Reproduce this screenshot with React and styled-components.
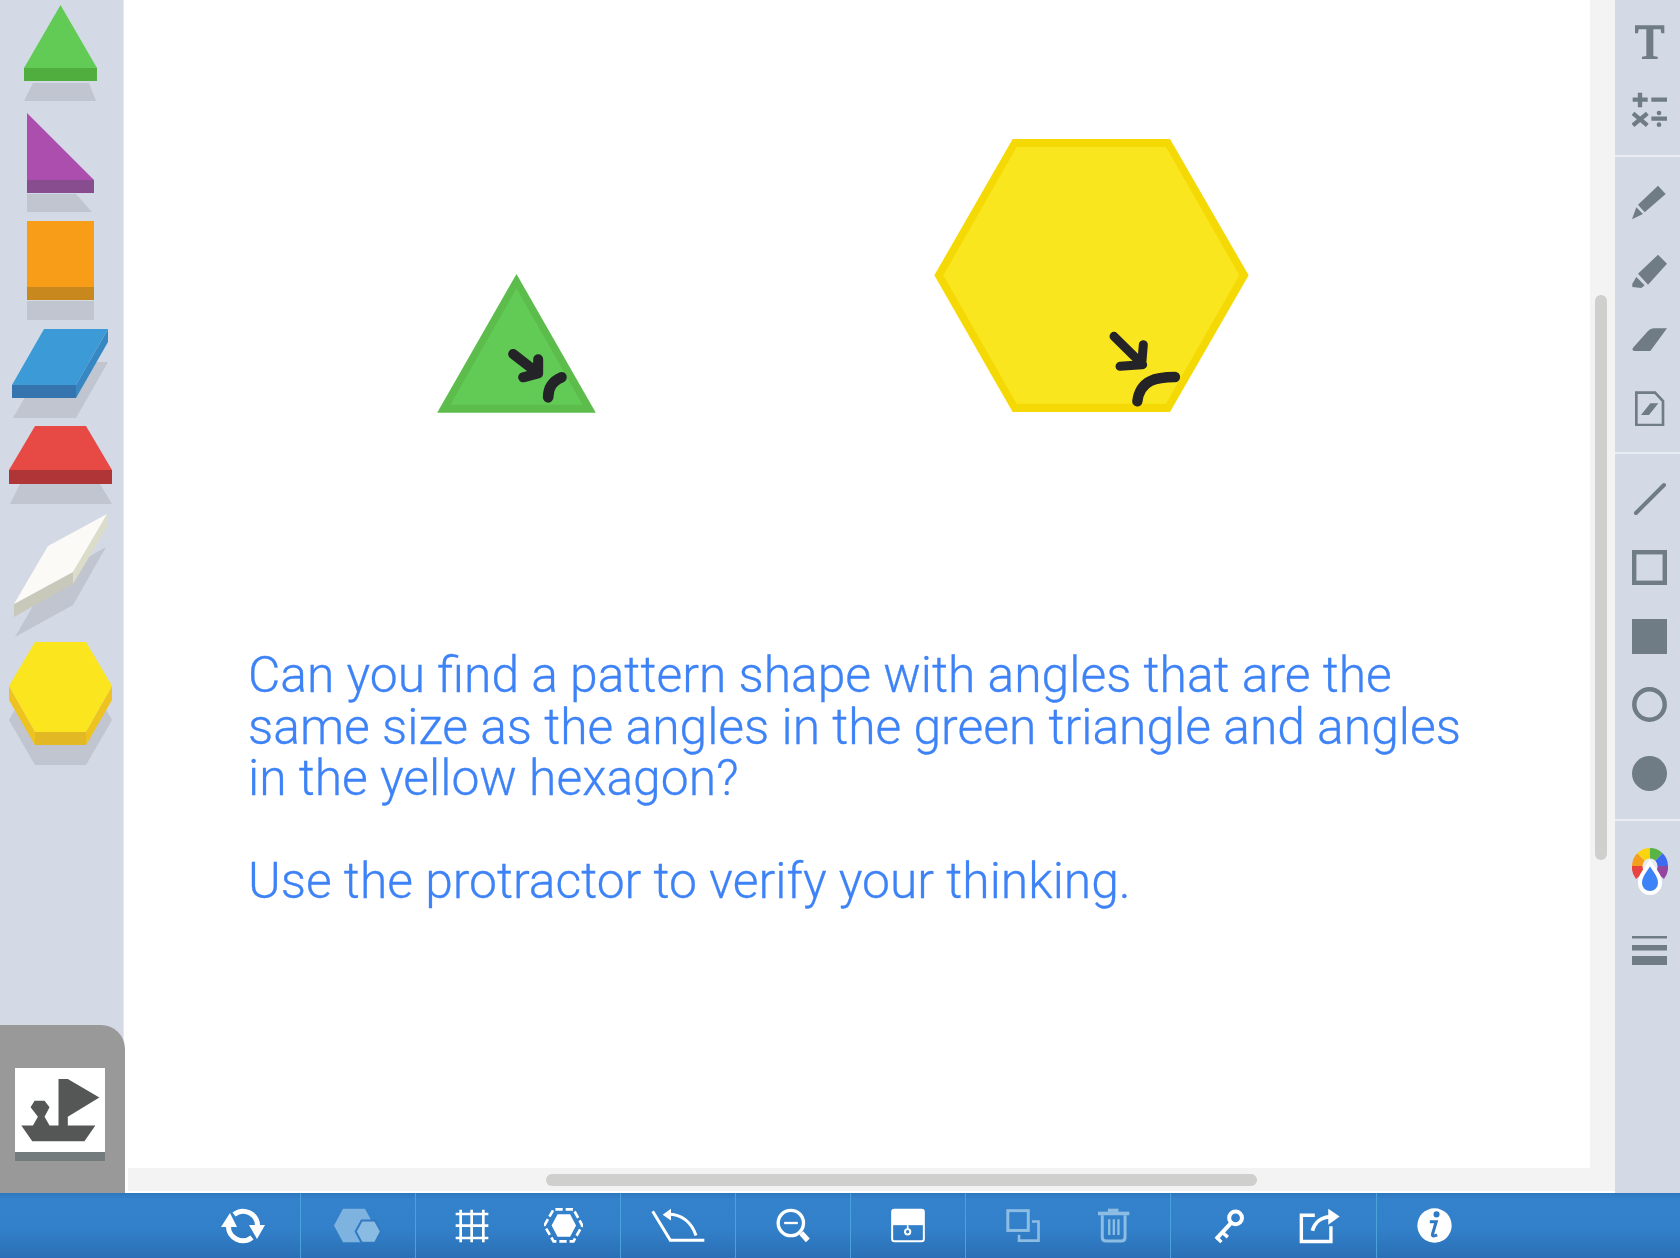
import React from 'react';
import styled, { createGlobalStyle } from 'styled-components';

const GlobalStyle = createGlobalStyle`
    html, body {
        margin: 0;
        padding: 0;
        height: 100%;
        overflow: hidden;
    }
    #root {
        height: 100%;
    }
`;

const Page = styled.div`
    width: 1680px;
    height: 1258px;
    display: flex;
    flex-direction: column;
    background-color: #ffffff;
    font-family: Roboto, 'Liberation Sans', sans-serif;
`;

const Main = styled.div`
    flex: 1;
    display: flex;
    min-height: 0;
`;

/* left tray with pattern blocks */
const ShapeTray = styled.aside`
    width: 124px;
    flex-shrink: 0;
    display: flex;
    flex-direction: column;
    justify-content: space-between;
    background-color: #d3dae6;
    box-shadow: inset -1px 0 0 #e4e8ef;
`;

const Blocks = styled.div`
    display: flex;
    flex-direction: column;
`;

const BlockSvg = styled.svg`
    display: block;
    width: 123px;
    flex-shrink: 0;
`;

const BoatPanel = styled.div`
    position: relative;
    z-index: 1;
    width: 125px;
    height: 168px;
    flex-shrink: 0;
    box-sizing: border-box;
    padding: 43px 0 0 15px;
    background-color: #999999;
    border-top-right-radius: 24px;
`;

const BoatTile = styled.div`
    width: 90px;
    height: 93px;
    box-sizing: border-box;
    background-color: #ffffff;
    border-bottom: 9px solid #737b7d;
`;

const BoatSvg = styled.svg`
    display: block;
    width: 90px;
    height: 84px;
`;

/* middle: canvas and its scrollbars */
const WorkArea = styled.div`
    flex: 1;
    min-width: 0;
    display: flex;
    flex-direction: column;
`;

const CanvasRow = styled.div`
    flex: 1;
    min-height: 0;
    display: flex;
`;

const Canvas = styled.div`
    flex: 1;
    position: relative;
    background-color: #ffffff;
`;

const Piece = styled.svg`
    position: absolute;
    left: ${(p) => p.$left}px;
    top: ${(p) => p.$top}px;
`;

const Note = styled.div`
    position: absolute;
    left: 124px;
    top: 650px;
    width: 1300px;
    font-size: 49.8px;
    font-weight: 300;
    line-height: 51.5px;
    color: #3d82f6;
    -webkit-text-stroke: 0.3px #3d82f6;
`;

const NoteBlock = styled.p`
    margin: 0 0 51.5px;
`;

const VerticalTrack = styled.div`
    width: 25px;
    flex-shrink: 0;
    box-sizing: border-box;
    padding: 295px 0 0 5px;
    background-color: #f3f3f3;
`;

const VerticalThumb = styled.div`
    width: 12px;
    height: 565px;
    border-radius: 6px;
    background-color: #cfcfcd;
`;

const HorizontalTrack = styled.div`
    height: 23px;
    flex-shrink: 0;
    box-sizing: border-box;
    margin: 0 0 2px 4px;
    padding: 6px 0 0 418px;
    background-color: #f3f3f3;
`;

const HorizontalThumb = styled.div`
    width: 711px;
    height: 12px;
    border-radius: 6px;
    background-color: #cfcfcd;
`;

/* right tools */
const ToolBar = styled.aside`
    width: 65px;
    flex-shrink: 0;
    display: flex;
    flex-direction: column;
    background-color: #d3dae6;
`;

const ToolGroup = styled.div`
    display: flex;
    flex-direction: column;
    padding: ${(p) => p.$top}px 0 ${(p) => p.$bottom}px 4px;
    border-bottom: ${(p) => (p.$last ? 'none' : '2px solid #e9ecf2')};
    gap: ${(p) => p.$gap || 0}px;
`;

const Tool = styled.div`
    height: 68.6px;
    display: flex;
    align-items: center;
    justify-content: center;
    color: #6f7c85;
`;

const ToolSvg = styled.svg`
    display: block;
    width: 35px;
    height: 35px;
`;

/* bottom bar */
const BottomBar = styled.footer`
    height: 65px;
    flex-shrink: 0;
    box-sizing: border-box;
    display: flex;
    padding-left: 186px;
    background: linear-gradient(#2c76c1 0, #3482cb 6px, #3280c9 55%, #2a6fb6 100%);
`;

const BarGroup = styled.div`
    display: flex;
    box-sizing: border-box;
    padding: 0 11.4px;
    border-right: ${(p) => (p.$last ? 'none' : '1px solid #4aa2d8')};
`;

const BarButton = styled.div`
    width: 91px;
    display: flex;
    align-items: center;
    justify-content: center;
    color: ${(p) => (p.$disabled ? '#8dbde3' : '#ffffff')};
`;

const block = (top, height, parts) => ({ top, height, parts });

const SHADOW = '#c0c5d0';

const BLOCKS = [
    block(0, 107, [
        [SHADOW, '33,83 89,83 96,101 24,101'],
        ['#4fae3d', '24,68 97,68 97,81 24,81'],
        ['#62cb55', '60.5,5 97,68 24,68'],
    ]),
    block(107, 108, [
        [SHADOW, '27,194 76,194 92,212 27,212'],
        ['#874d8e', '27,180 94,180 94,193 27,193'],
        ['#ab4eae', '27,113 94,180 27,180'],
    ]),
    block(215, 110, [
        [SHADOW, '27,301 94,301 94,320 27,320'],
        ['#c8881e', '27,287 94,287 94,300 27,300'],
        ['#f89d17', '27,221 94,221 94,287 27,287'],
    ]),
    block(325, 97, [
        [SHADOW, '45,362 108,362 76,418 13,418'],
        ['#3787c2', '108,329 108,342 76,398 76,385'],
        ['#3574ae', '12,385 76,385 76,398 12,398'],
        ['#3c9ad6', '44,329 108,329 76,385 12,385'],
    ]),
    block(422, 88, [
        [SHADOW, '20,484 100,484 112,504 10,504'],
        ['#b03536', '9,470 112,470 112,484 9,484'],
        ['#e74a45', '35,426 86,426 112,470 9,470'],
    ]),
    block(510, 130, [
        [SHADOW, '48,580 106,547 73,605 15,637'],
        ['#dcdccb', '107,514 107,527 73,584 73,572'],
        ['#c9c9bb', '14,604 73,572 73,584 14,617'],
        ['#fbfaf6', '48,546 107,514 73,572 14,604'],
    ]),
    block(640, 130, [
        [SHADOW, '9,720 35,675 86,675 112,720 86,765 35,765'],
        ['#eec21f', '9,686 35,732 86,732 112,686 112,700 86,745 35,745 9,700'],
        ['#e2b825', '35,732 86,732 86,745 35,745'],
        ['#fbe51f', '35,642 86,642 112,686 86,732 35,732 9,686'],
    ]),
];

const Stroke = ({ d, width = 9, cap = 'square', color = 'currentColor', join = 'miter' }) => (
    <path d={d} fill="none" stroke={color} strokeWidth={width} strokeLinecap={cap} strokeLinejoin={join} />
);

const BAR_BLUE = '#3079c3';

const BarIcon = ({ box, w, h, children }) => (
    <svg viewBox={box} width={w} height={h} fill="currentColor">{children}</svg>
);

const SyncIcon = () => (
    <BarIcon box="-23 -18 46 36" w={46} h={36}>
        <Stroke d="M-9,-11.5 A14.6 14.6 0 0 1 14.6,0" width={5} cap="butt" />
        <Stroke d="M9,11.5 A14.6 14.6 0 0 1 -14.6,0" width={5} cap="butt" />
        <polygon points="-13,-13 -22,1 -6,1" />
        <polygon points="6,-1 22,-1 14,13" />
    </BarIcon>
);

const ShapesIcon = () => (
    <BarIcon box="405 118 141 104" w={47} h={35}>
        <polygon points="405,170 432,120 498,120 525,170 498,220 432,220" fill="#7fb3df" />
        <polygon points="470,188 488,155 528,155 546,188 528,222 488,222" fill="#8abce3" stroke={BAR_BLUE} strokeWidth="6" />
    </BarIcon>
);

const GridIcon = () => (
    <BarIcon box="768 118 102 102" w={34} h={34}>
        <Stroke d="M785,120V218M818,120V218M853,120V218M770,133H868M770,168H868M770,205H868" width={8} cap="butt" />
    </BarIcon>
);

const HexDashIcon = () => (
    <BarIcon box="1033 118 118 104" w={39} h={35}>
        <polygon points="1034,170 1062,121 1122,121 1149,170 1122,218 1062,218" fill="none" stroke="currentColor" strokeWidth="8" strokeDasharray="22 9" />
        <polygon points="1056,170 1074,136 1112,136 1130,170 1112,204 1074,204" />
    </BarIcon>
);

const AngleIcon = () => (
    <BarIcon box="1355 118 168 104" w={56} h={35}>
        <Stroke d="M1363,127L1416,214H1518" cap="butt" />
        <Stroke d="M1410,136C1450,136 1480,160 1493,200" cap="butt" />
        <polygon points="1393,138 1418,120 1418,155" />
    </BarIcon>
);

const ZoomOutIcon = () => (
    <BarIcon box="225 115 110 108" w={37} h={36}>
        <circle cx="272" cy="160" r="38" fill="none" stroke="currentColor" strokeWidth="10" />
        <Stroke d="M252,160H293" width={7} cap="butt" />
        <Stroke d="M303,190L323,212" width={16} cap="butt" />
    </BarIcon>
);

const CardIcon = () => (
    <BarIcon box="570 116 108 106" w={36} h={35}>
        <rect x="576" y="121" width="96" height="96" rx="7" fill="none" stroke="currentColor" strokeWidth="6" />
        <rect x="576" y="121" width="96" height="47" />
        <Stroke d="M623,168V180" width={5} cap="butt" />
        <circle cx="623" cy="188" r="8" fill="none" stroke="currentColor" strokeWidth="6" />
    </BarIcon>
);

const CopyIcon = () => (
    <BarIcon box="914 116 108 106" w={36} h={35}>
        <rect x="922" y="124" width="62" height="60" fill="none" stroke="currentColor" strokeWidth="9" />
        <Stroke d="M995,157H1015V215H956V197" width={8} cap="butt" />
    </BarIcon>
);

const TrashIcon = () => (
    <BarIcon box="1192 116 100 106" w={33} h={35}>
        <rect x="1195" y="127" width="95" height="11" />
        <rect x="1225" y="118" width="32" height="10" />
        <Stroke d="M1208,138V205Q1208,216 1220,216H1265Q1277,216 1277,205V138" width={9} cap="butt" />
        <Stroke d="M1229,150V198M1243,150V198M1257,150V198" width={7} cap="butt" />
    </BarIcon>
);

const KeyIcon = () => (
    <BarIcon box="185 116 98 106" w={33} h={36}>
        <circle cx="255" cy="145" r="19" fill="none" stroke="currentColor" strokeWidth="12" />
        <Stroke d="M242,160L197,208" width={12} cap="butt" />
        <Stroke d="M216,188L232,202M200,204L213,217" width={10} cap="butt" />
    </BarIcon>
);

const ShareIcon = () => (
    <BarIcon box="443 116 122 106" w={41} h={36}>
        <Stroke d="M490,137H450V215H538V170" width={10} cap="butt" />
        <Stroke d="M483,183C490,158 510,143 535,142" width={11} cap="butt" />
        <polygon points="530,118 564,141 530,165" />
    </BarIcon>
);

const InfoIcon = () => (
    <BarIcon box="791 118 104 104" w={35} h={35}>
        <circle cx="843" cy="170" r="51" />
        <circle cx="849" cy="137" r="9" fill={BAR_BLUE} />
        <Stroke d="M829,159H848L837,196Q835,205 851,198" width={9} cap="butt" color={BAR_BLUE} />
    </BarIcon>
);

const ZoomedTool = ({ y, children }) => (
    <Tool>
        <ToolSvg viewBox={`157 ${y} 105 105`} fill="currentColor">{children}</ToolSvg>
    </Tool>
);

const PlainTool = ({ children }) => (
    <Tool>
        <ToolSvg viewBox="0 0 35 35" fill="currentColor">{children}</ToolSvg>
    </Tool>
);

const WHEEL = [
    ['#e8433f', 'M4,31 A18 18 0 0 1 0,18 L11,18 A7 7 0 0 0 12,24 Z'],
    ['#f59e1b', 'M0,18 A18 18 0 0 1 5.3,5.3 L13,13 A7 7 0 0 0 11,18 Z'],
    ['#f9d40f', 'M5.3,5.3 A18 18 0 0 1 18,0 L18,11 A7 7 0 0 0 13,13 Z'],
    ['#59b445', 'M18,0 A18 18 0 0 1 30.7,5.3 L23,13 A7 7 0 0 0 18,11 Z'],
    ['#3d6bf0', 'M30.7,5.3 A18 18 0 0 1 36,18 L25,18 A7 7 0 0 0 23,13 Z'],
    ['#95469f', 'M36,18 A18 18 0 0 1 32,31 L24,24 A7 7 0 0 0 25,18 Z'],
];

const App = () => (
    <Page>
        <GlobalStyle />
        <Main>
            <ShapeTray>
                <Blocks>
                    {BLOCKS.map((b) => (
                        <BlockSvg key={b.top} viewBox={`0 ${b.top} 123 ${b.height}`} height={b.height}>
                            {b.parts.map(([fill, points]) => (
                                <polygon key={points} fill={fill} points={points} />
                            ))}
                        </BlockSvg>
                    ))}
                </Blocks>
                <BoatPanel>
                    <BoatTile>
                        <BoatSvg viewBox="46 172 271 252">
                            <polygon
                                fill="#555757"
                                points="177,205 205,205 300,260 205,318 205,345 288,345 255,392 98,392 65,345 100,345 115,318 93,290 105,270 135,270 150,290 135,318 150,345 177,345"
                            />
                        </BoatSvg>
                    </BoatTile>
                </BoatPanel>
            </ShapeTray>

            <WorkArea>
                <CanvasRow>
                    <Canvas>
                        <Piece $left={313} $top={274} width={159} height={139} viewBox="52 42 476 417">
                            <polygon fill="#5cbd4d" points="290,42 528,458 52,458" />
                            <polygon fill="#62cb55" points="290,85 488,434 92,434" />
                            <Stroke d="M280,282L355,340M355,298L355,340L310,352" width={30} cap="round" join="round" color="#232328" />
                            <Stroke d="M425,352C395,365 385,385 385,412" width={32} cap="round" color="#232328" />
                        </Piece>
                        <Piece $left={810} $top={139} width={315} height={273} viewBox="43 28 943 819">
                            <polygon fill="#f5d905" points="278,28 750,28 986,437 750,847 278,847 43,437" />
                            <polygon fill="#f9e61e" points="290,52 738,52 958,437 738,822 290,822 70,437" />
                            <Stroke d="M582,620L668,705M670,645L665,705L600,710" width={27} cap="round" join="round" color="#232328" />
                            <Stroke d="M765,742C710,742 660,750 652,815" width={31} cap="round" color="#232328" />
                        </Piece>
                        <Note>
                            <NoteBlock>
                                Can you find a pattern shape with angles that are the<br />
                                same size as the angles in the green triangle and angles<br />
                                in the yellow hexagon?
                            </NoteBlock>
                            <NoteBlock>Use the protractor to verify your thinking.</NoteBlock>
                        </Note>
                    </Canvas>
                    <VerticalTrack>
                        <VerticalThumb />
                    </VerticalTrack>
                </CanvasRow>
                <HorizontalTrack>
                    <HorizontalThumb />
                </HorizontalTrack>
            </WorkArea>

            <ToolBar>
                <ToolGroup $top={7} $bottom={11}>
                    <ZoomedTool y={68}>
                        <polygon points="166,72 254,72 254,96 245,96 243,84 221,84 221,164 234,166 234,175 187,175 187,166 200,164 200,84 177,84 175,96 166,96" />
                    </ZoomedTool>
                    <ZoomedTool y={278}>
                        <Stroke d="M159,301H204M181,280V324M215,301H262M160,342L203,378M203,342L160,378M215,358H262" cap="butt" width={13} />
                        <circle cx="238" cy="341" r="7" />
                        <circle cx="238" cy="376" r="7" />
                    </ZoomedTool>
                </ToolGroup>
                <ToolGroup $top={11} $bottom={9}>
                    <ZoomedTool y={553}>
                        <polygon points="235,555 258,580 195,635 175,612" />
                        <polygon points="170,620 190,640 157,656" />
                    </ZoomedTool>
                    <ZoomedTool y={756}>
                        <polygon points="235,758 262,785 205,848 175,815" />
                        <polygon points="170,825 195,850 185,858 158,855 158,845" />
                    </ZoomedTool>
                    <ZoomedTool y={963}>
                        <path d="M222,982H262L212,1050H165Q155,1050 160,1040L205,990Q212,982 222,982Z" />
                    </ZoomedTool>
                    <ZoomedTool y={1168}>
                        <path d="M170,1173H226L250,1198V1270H170Z" fill="none" stroke="currentColor" strokeWidth="8" />
                        <polygon points="212,1205 236,1205 208,1240 184,1240" />
                    </ZoomedTool>
                </ToolGroup>
                <ToolGroup $top={11} $bottom={11}>
                    <PlainTool>
                        <Stroke d="M4,32L32,4" width={4} cap="round" />
                    </PlainTool>
                    <PlainTool>
                        <rect x="2.2" y="2.2" width="30.6" height="30.6" fill="none" stroke="currentColor" strokeWidth="4.4" />
                    </PlainTool>
                    <PlainTool>
                        <rect width="35" height="35" />
                    </PlainTool>
                    <PlainTool>
                        <circle cx="17.5" cy="17.5" r="15.2" fill="none" stroke="currentColor" strokeWidth="4.5" />
                    </PlainTool>
                    <PlainTool>
                        <circle cx="17.5" cy="17.5" r="17.5" />
                    </PlainTool>
                </ToolGroup>
                <ToolGroup $top={17} $bottom={0} $gap={8} $last>
                    <Tool>
                        <svg width="36" height="48" viewBox="0 0 36 48">
                            {WHEEL.map(([fill, d]) => (
                                <path key={fill} d={d} fill={fill} />
                            ))}
                            <circle cx="18" cy="18" r="7.5" fill="#e8ebf0" />
                            <path d="M18,15C24,24 28,28 28,35A10 10 0 0 1 8,35C8,28 12,24 18,15Z" fill="#3d82f6" stroke="#ffffff" strokeWidth="4" />
                        </svg>
                    </Tool>
                    <PlainTool>
                        <rect x="0" y="5" width="35" height="2.5" />
                        <rect x="0" y="14" width="35" height="5.5" />
                        <rect x="0" y="25" width="35" height="9" />
                    </PlainTool>
                </ToolGroup>
            </ToolBar>
        </Main>

        <BottomBar>
            <BarGroup><BarButton><SyncIcon /></BarButton></BarGroup>
            <BarGroup><BarButton $disabled><ShapesIcon /></BarButton></BarGroup>
            <BarGroup>
                <BarButton><GridIcon /></BarButton>
                <BarButton><HexDashIcon /></BarButton>
            </BarGroup>
            <BarGroup><BarButton><AngleIcon /></BarButton></BarGroup>
            <BarGroup><BarButton><ZoomOutIcon /></BarButton></BarGroup>
            <BarGroup><BarButton><CardIcon /></BarButton></BarGroup>
            <BarGroup>
                <BarButton $disabled><CopyIcon /></BarButton>
                <BarButton $disabled><TrashIcon /></BarButton>
            </BarGroup>
            <BarGroup>
                <BarButton><KeyIcon /></BarButton>
                <BarButton><ShareIcon /></BarButton>
            </BarGroup>
            <BarGroup $last><BarButton><InfoIcon /></BarButton></BarGroup>
        </BottomBar>
    </Page>
);

export default App;
